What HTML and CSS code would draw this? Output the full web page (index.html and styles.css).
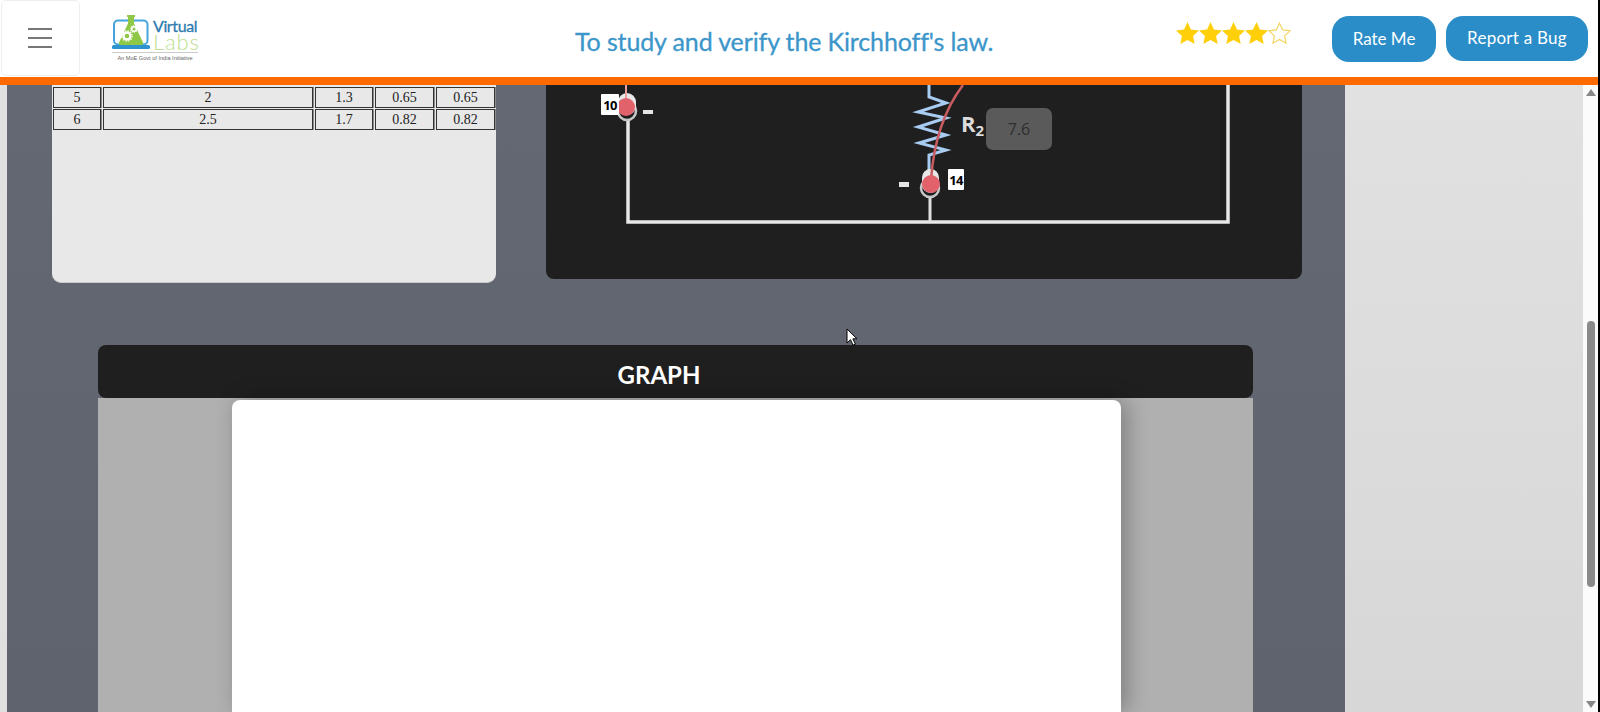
FILE: index.html
```html
<!DOCTYPE html>
<html lang="en">
<head>
<meta charset="utf-8">
<title>Kirchhoff's law</title>
<link rel="stylesheet" href="styles.css">
</head>
<body>
<div class="app">
  <header class="topbar">
    <button class="menu" aria-label="Menu"><span></span><span></span><span></span></button>
    <div class="logo">
      <div class="logo-main">
        <svg class="logo-mark" width="40" height="36" viewBox="111 13 40 36">
          <rect x="114" y="19.5" width="33.5" height="24" rx="4" fill="none" stroke="#45a5dc" stroke-width="2"/>
          <rect x="112" y="44" width="38" height="4" rx="1.5" fill="#2f93cf"/>
          <path d="M127 14h8v2h-1v6.500l9 19q.8 2.500-2 2.500h-20q-2.800 0-2-2.500l9-19v-6.500h-1z" fill="#8fc747"/>
          <circle cx="127" cy="35" r="3.500" fill="none" stroke="#fff" stroke-width="2.400"/>
          <circle cx="127" cy="35" r="5.200" fill="none" stroke="#fff" stroke-width="1.200" stroke-dasharray="1.500 1.200"/>
          <circle cx="134" cy="28" r="2.300" fill="none" stroke="#fff" stroke-width="1.600"/>
          <circle cx="134" cy="28" r="3.600" fill="none" stroke="#fff" stroke-width="1" stroke-dasharray="1.200 1"/>
        </svg>
        <div class="logo-words">
          <span class="logo-virtual">Virtual</span>
          <span class="logo-labs">Labs</span>
        </div>
      </div>
      <div class="logo-tag">An MoE Govt of India Initiative</div>
    </div>
    <h1 class="title">To study and verify the Kirchhoff's law.</h1>
    <div class="stars" aria-label="4 of 5 stars">
      <svg width="23" height="22" viewBox="0 0 24 23"><path class="star-full" d="M12 0l3.600 7.800 8.400 1-6.200 5.800 1.700 8.400-7.500-4.200L4.500 23l1.700-8.400L0 8.800l8.400-1z"/></svg>
      <svg width="23" height="22" viewBox="0 0 24 23"><path class="star-full" d="M12 0l3.600 7.800 8.400 1-6.200 5.800 1.700 8.400-7.500-4.200L4.500 23l1.700-8.400L0 8.800l8.400-1z"/></svg>
      <svg width="23" height="22" viewBox="0 0 24 23"><path class="star-full" d="M12 0l3.600 7.800 8.400 1-6.200 5.800 1.700 8.400-7.500-4.200L4.500 23l1.700-8.400L0 8.800l8.400-1z"/></svg>
      <svg width="23" height="22" viewBox="0 0 24 23"><path class="star-full" d="M12 0l3.600 7.800 8.400 1-6.200 5.800 1.700 8.400-7.500-4.200L4.500 23l1.700-8.400L0 8.800l8.400-1z"/></svg>
      <svg width="23" height="22" viewBox="0 0 24 23"><path class="star-empty" d="M12 1.200l3.300 7.100 7.700.9-5.700 5.300 1.500 7.600-6.800-3.800-6.800 3.800 1.500-7.600L1 9.200l7.700-.9z"/></svg>
    </div>
    <button class="btn btn-rate">Rate Me</button>
    <button class="btn btn-bug">Report a Bug</button>
  </header>

  <div class="content">
    <div class="edge"></div>
    <main class="main">
      <div class="upper">
        <section class="data-panel">
          <table class="data">
            <colgroup>
              <col class="c1"><col class="c2"><col class="c3"><col class="c4"><col class="c5">
            </colgroup>
            <tr><td>5</td><td>2</td><td>1.3</td><td>0.65</td><td>0.65</td></tr>
            <tr><td>6</td><td>2.5</td><td>1.7</td><td>0.82</td><td>0.82</td></tr>
          </table>
        </section>
        <section class="circuit">
          <svg class="circuit-svg" width="756" height="194" viewBox="546 85 756 194">
            <path class="wire" d="M628 120V222H1228V85"/>
            <path class="wire-thin" d="M930 195V222"/>
            <path class="coil" d="M929 85V97L946 103 918 112 946 118 918 127 946 135 919 143 946 150 929 155V172"/>
            <circle class="ring" cx="627" cy="111" r="9"/>
            <rect class="cap" x="618" y="93" width="18" height="22" rx="9"/>
            <path class="lead-light" d="M626 85V100"/>
            <circle class="pin" cx="626" cy="107" r="9"/>
            <rect class="tag" x="601" y="94" width="18" height="21" rx="1"/>
            <text class="tag-text" x="610" y="110">10</text>
            <rect class="dash" x="643" y="110" width="10" height="4"/>
            <circle class="ring" cx="930" cy="188" r="9"/>
            <rect class="cap" x="922" y="169" width="17" height="24" rx="8.500"/>
            <path class="lead" d="M963 85Q935 122 931 180"/>
            <circle class="pin" cx="931" cy="184" r="9"/>
            <rect class="tag" x="948" y="169" width="16" height="21" rx="1"/>
            <text class="tag-text" x="956" y="185">14</text>
            <rect class="dash" x="899" y="182" width="10" height="5"/>
            <text class="r-label" x="961" y="132">R<tspan class="r-sub" dy="4">2</tspan></text>
            <rect class="value-box" x="986" y="108" width="66" height="42" rx="7"/>
            <text class="value" x="1019" y="135">7.6</text>
          </svg>
        </section>
      </div>
      <section class="graph">
        <h2 class="graph-head">GRAPH</h2>
        <div class="graph-body"><div class="plot"></div></div>
      </section>
    </main>
    <aside class="side"></aside>
    <div class="scrollbar">
      <span class="arrow-up"></span>
      <span class="thumb"></span>
      <span class="arrow-down"></span>
    </div>
  </div>
  <svg class="cursor" width="12" height="18" viewBox="0 0 12 18"><path d="M1 1v14l3.500-3.300 2.500 5.500 2.400-1.100-2.500-5.300H11z" fill="#fff" stroke="#000"/></svg>
</div>
</body>
</html>
```
FILE: styles.css
```css
* { box-sizing: border-box; }
html, body { margin: 0; height: 712px; overflow: hidden; background: #000; }
.app { position: relative; width: 1598px; height: 712px; display: flex; flex-direction: column; overflow: hidden; }

.topbar { height: 85px; flex: none; display: flex; align-items: flex-start; background: #fff; border-bottom: 8px solid #ff6a00; }
.menu { width: 79px; height: 76px; margin-left: 1px; padding: 0 0 0 26px; display: flex; flex-direction: column; gap: 7px; justify-content: center; background: #fff; border: 1px solid #eee; border-radius: 5px; }
.menu span { display: block; width: 24px; height: 2px; background: #777; }

.logo { margin: 14px 0 0 32px; width: 86px; color: #555; font-family: Lato, sans-serif; }
.logo-main { display: flex; height: 38px; }
.logo-mark { flex: none; margin-left: -1px; }
.logo-words { display: flex; flex-direction: column; margin: 4px 0 0 2px; }
.logo-virtual { font-size: 16px; line-height: 16px; font-weight: 400; color: #2d7cae; letter-spacing: -.4px; -webkit-text-stroke: .3px #2d7cae; }
.logo-labs { font-size: 22px; line-height: 16px; font-weight: 300; color: #bddf8f; letter-spacing: .9px; }
.logo-tag { padding-top: 2px; border-top: 1px solid #ccc; font-family: "Liberation Sans", sans-serif; font-size: 5.600px; line-height: 7px; text-align: center; color: #666; white-space: nowrap; }

.title { margin: 25px 0 0 377px; width: 425px; font-family: Lato, sans-serif; font-size: 25px; line-height: 32px; font-weight: 400; color: #3c96ca; letter-spacing: -.13px; -webkit-text-stroke: .3px #3c96ca; white-space: nowrap; }
.stars { margin: 22px 0 0 176px; display: flex; width: 115px; }
.stars svg { flex: none; }
.star-full { fill: #ffcf0a; }
.star-empty { fill: #fff; stroke: #f4d35e; stroke-width: 1.200; }

.btn { margin-top: 16px; padding: 0 0 2px; border: 0; background: #2a8dc8; color: #fff; font-family: Lato, sans-serif; font-size: 17px; border-radius: 17px; }
.btn-rate { margin-left: 41px; width: 104px; height: 46px; }
.btn-bug { margin-left: 10px; width: 142px; height: 45px; letter-spacing: .25px; }

.content { flex: 1; min-height: 0; display: flex; }
.edge { width: 7px; flex: none; background: #e0e0e0; }
.main { width: 1338px; flex: none; padding-left: 45px; background: linear-gradient(#646872, #5f636e); overflow: hidden; }
.side { width: 238px; flex: none; background: linear-gradient(#e1e1e1, #d7d7d7); }

.upper { display: flex; align-items: flex-start; height: 197px; }
.data-panel { width: 444px; height: 198px; padding: 1px 0 0 1px; background: #e8e8e8; border-bottom: 1px solid #c9c9c9; border-radius: 0 0 9px 9px; }
.data { width: 446px; table-layout: fixed; border-collapse: separate; border-spacing: 2px 1px; margin-left: -2px; font-family: "Liberation Serif", serif; font-size: 14px; color: #222; text-align: center; }
.c1 { width: 48px; } .c2 { width: 210px; } .c3 { width: 58px; } .c4 { width: 59px; } .c5 { width: 59px; }
.data td { height: 21px; padding: 0; border: 1px solid #333; line-height: 18px; box-shadow: 1px 0 0 #8c8c8c; }
.circuit { width: 756px; height: 194px; margin-left: 50px; background: #1f1f1f; border-radius: 0 0 8px 8px; }
.circuit-svg { display: block; }

.wire { fill: none; stroke: #e8e8e8; stroke-width: 3.500; }
.wire-thin { fill: none; stroke: #e0e0e0; stroke-width: 3; }
.coil { fill: none; stroke: #a9ccf2; stroke-width: 3; }
.ring { fill: #1f1f1f; stroke: #c8c8c8; stroke-width: 2.500; }
.cap { fill: #e8e8e8; }
.pin { fill: #e2626c; }
.lead { fill: none; stroke: #c85c60; stroke-width: 2.500; }
.lead-light { fill: none; stroke: #eba0a0; stroke-width: 2; }
.tag { fill: #fff; }
.tag-text { font-family: "Open Sans", sans-serif; font-size: 13px; font-weight: 700; fill: #000; text-anchor: middle; letter-spacing: -.8px; }
.dash { fill: #e4e4e4; }
.r-label { font-family: "Open Sans", sans-serif; font-size: 22px; font-weight: 700; fill: #dcdcdc; }
.r-sub { font-size: 15px; }
.value-box { fill: #5a5a5a; }
.value { font-family: "Open Sans", sans-serif; font-size: 16px; fill: #2e2e2e; text-anchor: middle; }

.graph { width: 1155px; margin: 63px 0 0 46px; height: 367px; display: flex; flex-direction: column; }
.graph-head { flex: none; height: 53px; margin: 0; padding: 14px 33px 0 0; border-radius: 8px; background: #1f1f1f; color: #fff; font-family: Lato, sans-serif; font-size: 24px; line-height: 32px; font-weight: 700; text-align: center; }
.graph-body { flex: 1; padding: 2px 132px 0 134px; background: #b0b0b0; }
.plot { height: 100%; background: #fff; border-radius: 8px 8px 0 0; box-shadow: 6px 0 22px rgba(0,0,0,.28); }

.scrollbar { width: 15px; flex: none; display: flex; flex-direction: column; align-items: center; padding: 4px 0; background: #fbfbfb; }
.arrow-up { width: 0; height: 0; border: 5px solid transparent; border-top: 0; border-bottom: 7px solid #888; }
.thumb { width: 8px; height: 266px; margin-top: 225px; border-radius: 4px; background: #8a8a8a; }
.arrow-down { margin-top: auto; width: 0; height: 0; border: 5px solid transparent; border-bottom: 0; border-top: 7px solid #888; }

.cursor { position: absolute; left: 846px; top: 328px; }
```
